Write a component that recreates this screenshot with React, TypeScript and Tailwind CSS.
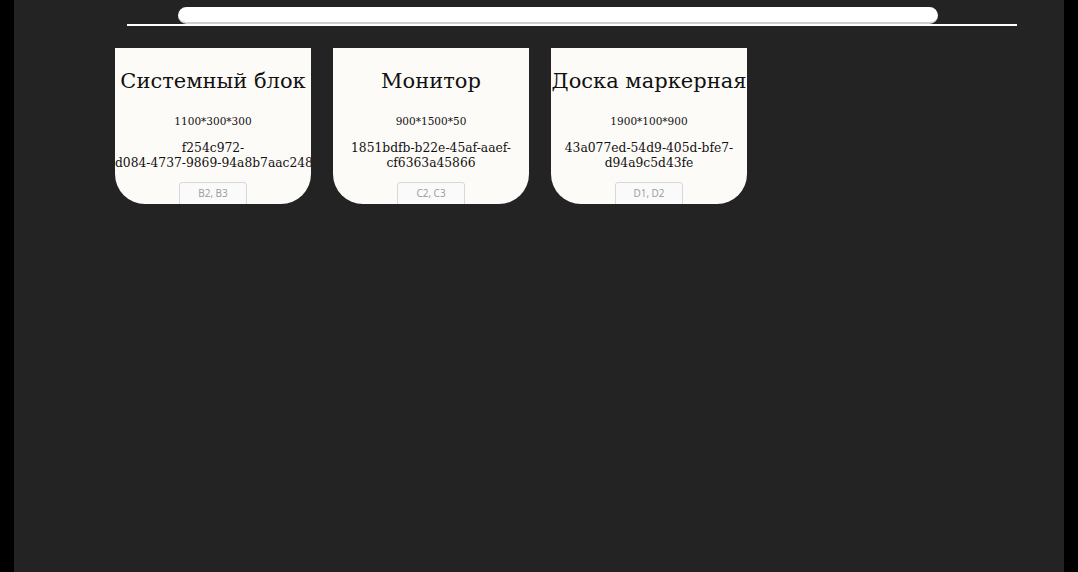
import React from "react";

interface Item {
  id: string[];
  name: string;
  size: string;
  cells: string;
}

// id split the way the reference wraps it
const items: Item[] = [
  { id: ["f254c972-", "d084-4737-9869-94a8b7aac248"], name: "Системный блок", size: "1100*300*300", cells: "B2, B3" },
  { id: ["1851bdfb-b22e-45af-aaef-", "cf6363a45866"], name: "Монитор", size: "900*1500*50", cells: "C2, C3" },
  { id: ["43a077ed-54d9-405d-bfe7-", "d94a9c5d43fe"], name: "Доска маркерная", size: "1900*100*900", cells: "D1, D2" },
];

function ItemCard({ item }: { item: Item }) {
  return (
    <div className="w-[196px] h-[156px] overflow-hidden rounded-b-[30px] bg-[#fdfbf8] text-center text-[#111] flex flex-col items-center font-['DejaVu_Serif',serif]">
      <h2 className="mt-[20px] whitespace-nowrap text-[21px] leading-[26px]">{item.name}</h2>
      <p className="mt-[21px] text-[10.5px] leading-[13px]">{item.size}</p>
      <p className="mt-[13px] w-full text-[12.3px] leading-[15px]">
        {item.id.map((line) => (
          <span key={line} className="block whitespace-nowrap">
            {line}
          </span>
        ))}
      </p>
      <button className="mt-[11px] h-[26px] w-[68px] shrink-0 rounded-[3px] border border-[#d8d8d8] bg-[#fafafa] pb-[4px] text-[10px] text-[#999] font-['Open_Sans',sans-serif]">
        {item.cells}
      </button>
    </div>
  );
}

export default function App() {
  return (
    <div className="h-[572px] w-[1078px] overflow-hidden bg-black">
      <div className="mx-[14px] h-full bg-[#232323] shadow-[0_0_12px_4px_rgba(0,0,0,0.9)] pt-[7px]">
        <div className="pl-[113px] pr-[47px]">
          <div className="ml-[51px] mr-[79px] h-[17px] rounded-full border-b-2 border-[#cfcfcf] bg-white" />
          <div className="h-[2px] bg-white" />
        </div>
        <div className="mt-[22px] flex gap-[22px] pl-[101px]">
          {items.map((item) => (
            <ItemCard key={item.name} item={item} />
          ))}
        </div>
      </div>
    </div>
  );
}
